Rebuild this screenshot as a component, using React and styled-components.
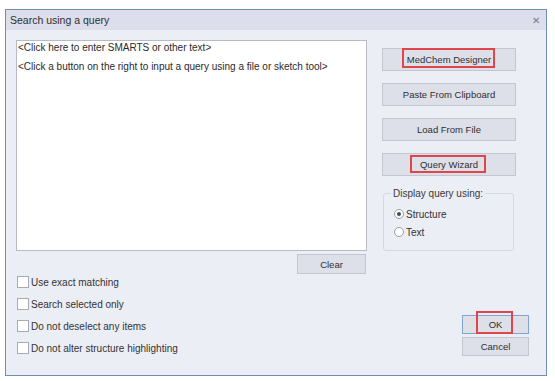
import React from 'react'
import styled, { createGlobalStyle } from 'styled-components'

const GlobalStyle = createGlobalStyle`
  html, body {
    margin: 0;
    padding: 0;
    background: #ffffff;
  }
  body {
    font-family: "Liberation Sans", Arial, sans-serif;
    color: #333;
  }
`

const checks = [
  'Use exact matching',
  'Search selected only',
  'Do not deselect any items',
  'Do not alter structure highlighting',
]

export default function App() {
  return (
    <>
      <GlobalStyle />
      <Dialog>
        <TitleBar>
          <Title>Search using a query</Title>
          <Close>✕</Close>
        </TitleBar>
        <Body>
          <LeftColumn>
            <QueryBox>
              <Hint>&lt;Click here to enter SMARTS or other text&gt;</Hint>
              <Hint>&lt;Click a button on the right to input a query using a file or sketch tool&gt;</Hint>
            </QueryBox>
            <ClearRow>
              <Button $width="69px" $height="20px">Clear</Button>
            </ClearRow>
            <CheckList>
              {checks.map((c) => (
                <CheckRow key={c}>
                  <CheckBox />
                  <span>{c}</span>
                </CheckRow>
              ))}
            </CheckList>
          </LeftColumn>
          <RightColumn>
            <ToolButtons>
              <Button>
                MedChem Designer
                <Mark $inset="-1px 20px 2px 19px" />
              </Button>
              <Button>Paste From Clipboard</Button>
              <Button>Load From File</Button>
              <Button>
                Query Wizard
                <Mark $inset="1px 29px 2px 27px" />
              </Button>
            </ToolButtons>
            <Group>
              <Legend>Display query using:</Legend>
              <RadioRow>
                <Radio $checked />
                <span>Structure</span>
              </RadioRow>
              <RadioRow>
                <Radio />
                <span>Text</span>
              </RadioRow>
            </Group>
            <Footer>
              <Button $width="67px" $height="19px" $default>
                OK
                <Mark $inset="-5px 15px -1px 13px" />
              </Button>
              <Button $width="67px" $height="19px">Cancel</Button>
            </Footer>
          </RightColumn>
        </Body>
      </Dialog>
    </>
  )
}

const Dialog = styled.div`
  margin: 9px 8px 0 5px;
  width: 542px;
  height: 367px;
  box-sizing: border-box;
  border: 1px solid #6f8fb4;
  background: #eceef6;
  display: flex;
  flex-direction: column;
`

const TitleBar = styled.div`
  height: 21px;
  background: #dcdeeb;
  display: flex;
  align-items: center;
  justify-content: space-between;
  padding: 0 6px 0 4px;
`

const Title = styled.div`
  font-size: 10.5px;
  color: #2e2e2e;
`

const Close = styled.div`
  font-size: 10px;
  color: #7a7a80;
`

const Body = styled.div`
  flex: 1;
  display: flex;
  padding: 10px 17px 19px 10px;
  font-size: 10px;
`

const LeftColumn = styled.div`
  width: 351px;
  display: flex;
  flex-direction: column;
`

const QueryBox = styled.div`
  height: 211px;
  box-sizing: border-box;
  background: #ffffff;
  border: 1px solid #b9bbc4;
  padding: 1px 1px;
  display: flex;
  flex-direction: column;
  gap: 8px;
`

const Hint = styled.div`
  color: #2a2a2a;
  line-height: 11px;
`

const ClearRow = styled.div`
  display: flex;
  justify-content: flex-end;
  padding-right: 1px;
  margin-top: 3px;
`

const Button = styled.div`
  position: relative;
  width: ${(p) => p.$width || '134px'};
  height: ${(p) => p.$height || '23px'};
  box-sizing: border-box;
  background: #dddfe9;
  border: 1px solid ${(p) => (p.$default ? '#7ea4cf' : '#c3c5cf')};
  display: flex;
  align-items: center;
  justify-content: center;
  font-size: 9.5px;
  color: #2f2f2f;
`

const Mark = styled.span`
  position: absolute;
  inset: ${(p) => p.$inset};
  border: 2px solid #e0454a;
`

const CheckList = styled.div`
  display: flex;
  flex-direction: column;
  gap: 6px;
  padding-left: 1px;
`

const CheckRow = styled.div`
  height: 16px;
  display: flex;
  align-items: center;
  gap: 2px;
  color: #333;
`

const CheckBox = styled.span`
  width: 10px;
  height: 10px;
  background: #ffffff;
  border: 1px solid #a9abb3;
`

const RightColumn = styled.div`
  flex: 1;
  margin-left: 15px;
  display: flex;
  flex-direction: column;
  padding-top: 8px;
`

const ToolButtons = styled.div`
  display: flex;
  flex-direction: column;
  gap: 12px;
`

const Group = styled.fieldset`
  margin: 12px 0 0 1px;
  width: 131px;
  height: 63px;
  box-sizing: border-box;
  border: 1px solid #d6d8e0;
  border-radius: 3px;
  padding: 9px 0 0 10px;
  display: flex;
  flex-direction: column;
  gap: 6px;
`

const Legend = styled.legend`
  padding: 0 2px;
  margin-left: -3px;
  color: #3a3a3a;
`

const RadioRow = styled.div`
  display: flex;
  align-items: center;
  gap: 2px;
  height: 12px;
`

const Radio = styled.span`
  width: 10px;
  height: 10px;
  box-sizing: border-box;
  border-radius: 50%;
  background: #ffffff;
  border: 1px solid #9c9ea6;
  display: flex;
  align-items: center;
  justify-content: center;
  &::after {
    content: '';
    display: ${(p) => (p.$checked ? 'block' : 'none')};
    width: 4px;
    height: 4px;
    border-radius: 50%;
    background: #4a4a4a;
  }
`

const Footer = styled.div`
  margin-top: auto;
  display: flex;
  flex-direction: column;
  align-items: flex-end;
  gap: 3px;
`
